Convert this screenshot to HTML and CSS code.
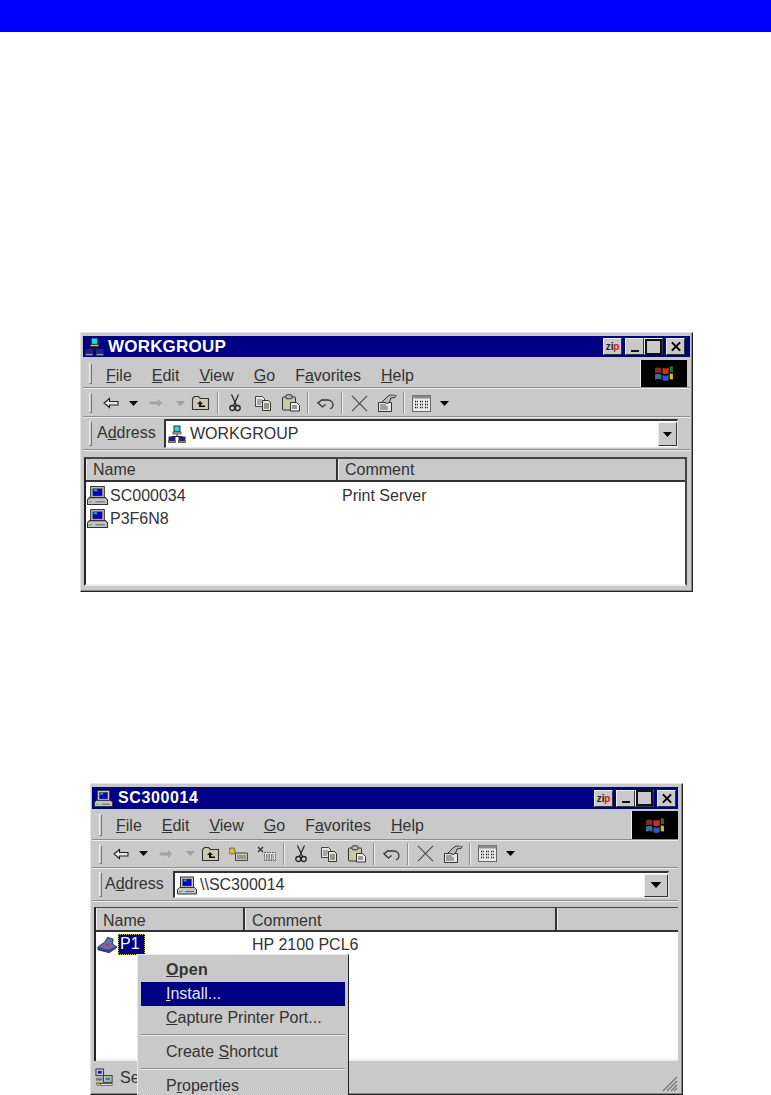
FILE: index.html

```html
<!DOCTYPE html>
<html lang="en">
<head>
    <meta charset="UTF-8">
    <meta name="viewport" content="width=device-width, initial-scale=1.0">
    <title>Network Printer Setup</title>
    <link rel="stylesheet" href="styles.css">
</head>
<body>
    <svg class="defs" width="0" height="0">
        <defs>
            <symbol id="i-pc" viewBox="0 0 20 18">
                <rect x="3.5" y=".5" width="13" height="11" fill="#c9c9c9" stroke="#333"/>
                <rect x="5.5" y="2.5" width="9" height="7" fill="#0606b8" stroke="#555" stroke-width=".5"/>
                <rect x="6.5" y="3" width="3" height="2" fill="#22a6c8"/>
                <path d="M.5 13l2-2h15l2 2v4.500H.5z" fill="#c4c4c4" stroke="#333"/>
                <rect x="2" y="14.500" width="3" height="1" fill="#1bc44a"/>
                <rect x="8" y="14.500" width="9" height="1" fill="#666"/>
            </symbol>
            <symbol id="i-net" viewBox="0 0 18 18">
                <path d="M9 8v3M4 11.500h10M4 11.500v1M14 11.500v1" stroke="#222" fill="none"/>
                <rect x="6" y="1" width="6" height="6" fill="#25d5e0" stroke="#333"/>
                <rect x="5" y="7" width="8" height="2" fill="#bbb" stroke="#333" stroke-width=".7"/>
                <rect x="1" y="12" width="6" height="4" fill="#1616d8" stroke="#333"/>
                <rect x="11" y="12" width="6" height="4" fill="#1616d8" stroke="#333"/>
                <rect x=".5" y="16" width="7" height="1.500" fill="#bbb" stroke="#333" stroke-width=".7"/>
                <rect x="10.500" y="16" width="7" height="1.500" fill="#bbb" stroke="#333" stroke-width=".7"/>
            </symbol>
            <symbol id="i-printer" viewBox="0 0 22 18">
                <path d="M1 11l7-5 3-5 6 2-1 5 5 3-8 6-4-1-8-2z" fill="#6a6fa8" stroke="#2d2f5c"/>
                <path d="M1 11l11 3 9-4v2l-9 5-11-3z" fill="#3d4080"/>
                <rect x="9" y="8" width="4" height="1.500" fill="#c0304a"/>
            </symbol>
            <symbol id="i-status" viewBox="0 0 20 20">
                <rect x="1" y="1" width="8" height="7" fill="#c8c8c8" stroke="#333"/>
                <rect x="3" y="3" width="4" height="3" fill="#1616b0"/>
                <rect x="9" y="8" width="9" height="7" fill="#c8c8c8" stroke="#333"/>
                <rect x="11" y="10" width="5" height="3" fill="#109a9a"/>
                <path d="M1 12.500h7M1 16h17" stroke="#333"/>
                <rect x="1" y="10" width="7" height="1.500" fill="#888"/>
                <circle cx="3" cy="17" r="1.500" fill="#e4d020" stroke="#333" stroke-width=".5"/>
                <rect x="6" y="16.500" width="12" height="2" fill="#ddd" stroke="#333" stroke-width=".6"/>
            </symbol>
            <symbol id="i-back" viewBox="0 0 16 12">
                <path d="M6.500 1.500L1 6l5.500 4.500V8H15V4.500H6.500z" fill="#e6e6e6" stroke="#222" stroke-width="1.100"/>
            </symbol>
            <symbol id="i-fwd" viewBox="0 0 16 12">
                <path d="M9.500 1L15 6l-5.500 5V8H1V4h8.500z" fill="#a4a4a4" stroke="#d8d8d8" stroke-width=".7"/>
            </symbol>
            <symbol id="i-drop" viewBox="0 0 9 5">
                <path d="M0 0h9L4.500 5z"/>
            </symbol>
            <symbol id="i-up" viewBox="0 0 19 16">
                <path d="M1.500 14.500V3.500l2-2h4l2 2h8v11z" fill="#c9c9b4" stroke="#333" stroke-width="1.100"/>
                <path d="M9 6L6 9h2v3h6v-1.500H10V9h2z" fill="#111"/>
            </symbol>
            <symbol id="i-new" viewBox="0 0 20 16">
                <path d="M6.500 14.500V7h12v7.500z" fill="#c9c9b4" stroke="#444"/>
                <path d="M8 10h9M8 12h9" stroke="#666"/>
                <path d="M3 1l1 2 2-1-1 2 2 1-2 1 1 2-2-1-1 2-1-2-2 1 1-2-2-1 2-1-1-2 2 1z" fill="#e8c020" stroke="#444" stroke-width=".5"/>
            </symbol>
            <symbol id="i-delf" viewBox="0 0 20 16">
                <path d="M1 1l5 5M6 1L1 6" stroke="#333" stroke-width="1.300"/>
                <rect x="7.500" y="6.500" width="11" height="8" fill="#ddd" stroke="#555" stroke-dasharray="1.500 1"/>
                <path d="M9 9h8M9 11h8M9 13h8" stroke="#333" stroke-dasharray="1.500 1"/>
            </symbol>
            <symbol id="i-cut" viewBox="0 0 12 18">
                <path d="M2.500 .5l5 11M9.500 .5l-5 11" stroke="#222" stroke-width="1.200" fill="none"/>
                <circle cx="3.300" cy="14" r="2.500" fill="none" stroke="#222" stroke-width="1.300"/>
                <circle cx="8.700" cy="14" r="2.500" fill="none" stroke="#222" stroke-width="1.300"/>
            </symbol>
            <symbol id="i-copy" viewBox="0 0 18 16">
                <path d="M1.500 1.500h7l2 2v8h-9z" fill="#e8e8e8" stroke="#444"/>
                <path d="M3 5h5M3 7h5M3 9h4" stroke="#666"/>
                <path d="M8.500 5.500h6l2 2v8h-8z" fill="#e8e8d8" stroke="#333"/>
                <path d="M10 9h5M10 11h5M10 13h5" stroke="#444"/>
            </symbol>
            <symbol id="i-paste" viewBox="0 0 20 18">
                <rect x="1.500" y="3" width="13" height="13" rx="1" fill="#c9c9a8" stroke="#333"/>
                <rect x="5" y=".8" width="6" height="4" rx="1" fill="#bbb" stroke="#333"/>
                <path d="M9.500 8.500h6l3 3v5.500h-9z" fill="#eee" stroke="#333"/>
                <path d="M11 12h5M11 14h5" stroke="#444"/>
            </symbol>
            <symbol id="i-undo" viewBox="0 0 19 14">
                <path d="M2 7l3.500-3h6c3.500 0 6 2.500 5.500 5.500-.3 2-1.500 3-3 3.500M2 7v-.1l4.500 4 3-2.500" fill="none" stroke="#333" stroke-width="1.300"/>
            </symbol>
            <symbol id="i-x" viewBox="0 0 18 18">
                <path d="M1 1l16 16M17 1L1 17" stroke="#444" stroke-width="1.100"/>
            </symbol>
            <symbol id="i-close" viewBox="0 0 12 12">
                <path d="M1.500 1.500l9 9M10.500 1.500l-9 9" stroke="#000" stroke-width="2.200"/>
            </symbol>
            <symbol id="i-props" viewBox="0 0 21 18">
                <path d="M1.500 8.500h13v9h-13z" fill="#e8e8e8" stroke="#333"/>
                <path d="M3 11h6M3 13h8M3 15h8" stroke="#555"/>
                <path d="M5 8l5-5 3-2 6 .5-1 2-4 .5-1 3-2 2.500z" fill="#bbb" stroke="#333"/>
                <path d="M14 1.500h6" stroke="#777"/>
            </symbol>
            <symbol id="i-views" viewBox="0 0 19 17">
                <rect x=".5" y=".5" width="18" height="16" fill="#ececec" stroke="#666"/>
                <rect x=".5" y=".5" width="18" height="3" fill="#8a8a8a"/>
                <path d="M3 6.500h3M8 6.500h3M13 6.500h3M3 9.500h3M8 9.500h3M13 9.500h3M3 12.500h3M8 12.500h3M13 12.500h3" stroke="#111" stroke-width="1.500" stroke-dasharray="1 .8"/>
            </symbol>
            <symbol id="i-flag" viewBox="0 0 20 18">
                <path d="M1 4c2-1 4-1 6 0v5c-2-1-4-1-6 0z" fill="#7c2f24"/>
                <path d="M8 3.500c2 1 4 1 6 0v5.500c-2 1-4 1-6 0z" fill="#c62f1e"/>
                <path d="M15 2c1 0 2 .5 3 0v5.500c-1 .5-2 0-3 0z" fill="#1c7a28"/>
                <path d="M1 10c2-1 4-1 6 0v5c-2-1-4-1-6 0z" fill="#3c6e9c"/>
                <path d="M8 10.500c2 1 4 1 6 0v5c-2 1-4 1-6 0z" fill="#2a58c8"/>
                <path d="M15 9c1 0 2 .5 3 0v5.500c-1 .5-2 0-3 0z" fill="#d8c020"/>
            </symbol>
        </defs>
    </svg>

    <div class="page">
        <div class="banner"></div>

        <div class="win win-a">
            <div class="titlebar">
                <svg class="title-icon"><use href="#i-net"/></svg>
                <span class="title-text">WORKGROUP</span>
                <div class="title-btns">
                    <span class="tb zip">zi<b>p</b></span>
                    <span class="tb tb-min"></span>
                    <span class="tb tb-max"></span>
                    <span class="tb tb-close"><svg><use href="#i-close"/></svg></span>
                </div>
            </div>
            <div class="bar menubar">
                <span class="grip"></span>
                <span class="menu-items">
                    <span><u>F</u>ile</span><span><u>E</u>dit</span><span><u>V</u>iew</span><span><u>G</u>o</span><span>F<u>a</u>vorites</span><span><u>H</u>elp</span>
                </span>
                <span class="logo"><svg><use href="#i-flag"/></svg></span>
            </div>
            <div class="bar toolbar">
                <span class="grip"></span>
                <span class="tools">
                    <span class="tool w-back"><svg class="ic-arrow"><use href="#i-back"/></svg></span>
                    <span class="tool w-drop"><svg class="ic-drop"><use href="#i-drop"/></svg></span>
                    <span class="tool w-big"><svg class="ic-arrow"><use href="#i-fwd"/></svg></span>
                    <span class="tool w-drop2"><svg class="ic-drop dim"><use href="#i-drop"/></svg></span>
                    <span class="tool w-up"><svg class="ic-up"><use href="#i-up"/></svg></span>
                    <span class="sep"></span>
                    <span class="tool w-big"><svg class="ic-cut"><use href="#i-cut"/></svg></span>
                    <span class="tool w-big"><svg class="ic-copy"><use href="#i-copy"/></svg></span>
                    <span class="tool w-big"><svg class="ic-paste"><use href="#i-paste"/></svg></span>
                    <span class="sep"></span>
                    <span class="tool w-big"><svg class="ic-undo"><use href="#i-undo"/></svg></span>
                    <span class="sep"></span>
                    <span class="tool w-big"><svg class="ic-x"><use href="#i-x"/></svg></span>
                    <span class="tool w-big"><svg class="ic-props"><use href="#i-props"/></svg></span>
                    <span class="sep"></span>
                    <span class="tool w-big"><svg class="ic-views"><use href="#i-views"/></svg></span>
                    <span class="tool w-drop"><svg class="ic-drop"><use href="#i-drop"/></svg></span>
                </span>
            </div>
            <div class="bar addressbar">
                <span class="grip"></span>
                <span class="address-label">A<u>d</u>dress</span>
                <div class="address-field">
                    <svg class="addr-icon"><use href="#i-net"/></svg>
                    <span>WORKGROUP</span>
                    <span class="combo-btn"><svg class="ic-drop"><use href="#i-drop"/></svg></span>
                </div>
            </div>
            <div class="list">
                <div class="list-head">
                    <span class="col col-name">Name</span>
                    <span class="col col-rest">Comment</span>
                </div>
                <div class="list-body">
                    <div class="row">
                        <span class="cell-name"><svg class="row-icon"><use href="#i-pc"/></svg>SC000034</span>
                        <span>Print Server</span>
                    </div>
                    <div class="row">
                        <span class="cell-name"><svg class="row-icon"><use href="#i-pc"/></svg>P3F6N8</span>
                    </div>
                </div>
            </div>
        </div>

        <div class="win win-b">
            <div class="titlebar">
                <svg class="title-icon"><use href="#i-pc"/></svg>
                <span class="title-text">SC300014</span>
                <div class="title-btns">
                    <span class="tb zip">zi<b>p</b></span>
                    <span class="tb tb-min"></span>
                    <span class="tb tb-max"></span>
                    <span class="tb tb-close"><svg><use href="#i-close"/></svg></span>
                </div>
            </div>
            <div class="bar menubar">
                <span class="grip"></span>
                <span class="menu-items">
                    <span><u>F</u>ile</span><span><u>E</u>dit</span><span><u>V</u>iew</span><span><u>G</u>o</span><span>F<u>a</u>vorites</span><span><u>H</u>elp</span>
                </span>
                <span class="logo"><svg><use href="#i-flag"/></svg></span>
            </div>
            <div class="bar toolbar">
                <span class="grip"></span>
                <span class="tools">
                    <span class="tool w-back"><svg class="ic-arrow"><use href="#i-back"/></svg></span>
                    <span class="tool w-drop"><svg class="ic-drop"><use href="#i-drop"/></svg></span>
                    <span class="tool w-big"><svg class="ic-arrow"><use href="#i-fwd"/></svg></span>
                    <span class="tool w-drop2"><svg class="ic-drop dim"><use href="#i-drop"/></svg></span>
                    <span class="tool w-up"><svg class="ic-up"><use href="#i-up"/></svg></span>
                    <span class="tool w-big"><svg class="ic-new"><use href="#i-new"/></svg></span>
                    <span class="tool w-big"><svg class="ic-new"><use href="#i-delf"/></svg></span>
                    <span class="sep"></span>
                    <span class="tool w-big"><svg class="ic-cut"><use href="#i-cut"/></svg></span>
                    <span class="tool w-big"><svg class="ic-copy"><use href="#i-copy"/></svg></span>
                    <span class="tool w-big"><svg class="ic-paste"><use href="#i-paste"/></svg></span>
                    <span class="sep"></span>
                    <span class="tool w-big"><svg class="ic-undo"><use href="#i-undo"/></svg></span>
                    <span class="sep"></span>
                    <span class="tool w-big"><svg class="ic-x"><use href="#i-x"/></svg></span>
                    <span class="tool w-big"><svg class="ic-props"><use href="#i-props"/></svg></span>
                    <span class="sep"></span>
                    <span class="tool w-big"><svg class="ic-views"><use href="#i-views"/></svg></span>
                    <span class="tool w-drop"><svg class="ic-drop"><use href="#i-drop"/></svg></span>
                </span>
            </div>
            <div class="bar addressbar">
                <span class="grip"></span>
                <span class="address-label">A<u>d</u>dress</span>
                <div class="address-field">
                    <svg class="addr-icon"><use href="#i-pc"/></svg>
                    <span>\\SC300014</span>
                    <span class="combo-btn"><svg class="ic-drop"><use href="#i-drop"/></svg></span>
                </div>
            </div>
            <div class="list">
                <div class="list-head">
                    <span class="col col-name">Name</span>
                    <span class="col col-comment">Comment</span>
                    <span class="col col-rest"></span>
                </div>
                <div class="list-body">
                    <div class="row">
                        <span class="cell-name">
                            <svg class="row-icon printer"><use href="#i-printer"/></svg>
                            <span class="selected">P1</span>
                        </span>
                        <span>HP 2100 PCL6</span>
                    </div>
                    <div class="context-menu">
                        <div class="cm-item cm-default"><u>O</u>pen</div>
                        <div class="cm-item cm-active"><u>I</u>nstall...</div>
                        <div class="cm-item"><u>C</u>apture Printer Port...</div>
                        <div class="cm-sep"></div>
                        <div class="cm-item">Create <u>S</u>hortcut</div>
                        <div class="cm-sep"></div>
                        <div class="cm-item">P<u>r</u>operties</div>
                    </div>
                </div>
            </div>
            <div class="statusbar">
                <svg class="status-icon"><use href="#i-status"/></svg>
                <span>Se</span>
                <svg class="resize-grip" viewBox="0 0 18 18">
                    <path d="M17 3L3 17M17 7L7 17M17 11L11 17M17 14L14 17" stroke="#777" stroke-width="1.200"/>
                </svg>
            </div>
        </div>
    </div>
</body>
</html>
```

FILE: styles.css

```css
* {
    box-sizing: border-box;
}
body {
    margin: 0;
    background: #fff;
    font-family: "Liberation Sans", Arial, sans-serif;
    font-size: 16px;
    color: #333;
}
.defs {
    display: block;
    height: 0;
}
.page {
    height: 1095px;
    overflow: hidden;
}
.banner {
    height: 32px;
    background: #0000ff;
}

/* window frame */
.win {
    background: #c9c9c9;
    border: 1px solid #222;
    border-top-color: #e4e4e4;
    border-left-color: #e4e4e4;
    box-shadow: inset -1px -1px 0 #8a8a8a;
}
.win-a {
    width: 613px;
    margin: 300px 0 0 80px;
    padding: 3px 2px 5px 2px;
}
.win-b {
    width: 593px;
    margin: 191px 0 0 90px;
    padding: 3px 4px 1px 1px;
    background: repeating-conic-gradient(#c2c2c2 0 25%, #d0d0d0 0 50%) 0 0 / 2px 2px;
}
.titlebar {
    display: flex;
    align-items: center;
    background: #000084;
    color: #fff;
    padding-left: 2px;
}
.win-a .titlebar {
    height: 21px;
}
.win-b .titlebar {
    height: 22px;
}
.title-icon {
    width: 19px;
    height: 19px;
    flex: none;
}
.title-text {
    margin-left: 4px;
    font-size: 17px;
    font-weight: bold;
    letter-spacing: .2px;
}
.win-b .title-text {
    font-size: 16px;
    letter-spacing: .6px;
    margin-left: 5px;
}
.title-btns {
    display: flex;
    margin-left: auto;
}
.win-a .title-btns {
    margin-right: 5px;
}
.win-b .title-btns {
    margin-right: 2px;
}
.tb {
    width: 19px;
    height: 17px;
    background: #c9c9c9;
    border: 1px solid;
    border-color: #eee #333 #333 #eee;
    display: flex;
    align-items: center;
    justify-content: center;
}
.tb svg {
    width: 12px;
    height: 11px;
}
.zip {
    margin-right: 3px;
    font-size: 10px;
    font-weight: bold;
    color: #222;
    letter-spacing: -.2px;
}
.zip b {
    color: #e01010;
}
.tb-min::before {
    content: "";
    width: 8px;
    height: 2px;
    background: #111;
    margin-top: 8px;
}
.tb-max::before {
    content: "";
    width: 13px;
    height: 12px;
    border: 2px solid #111;
    border-top-width: 2px;
}
.tb-close {
    margin-left: 3px;
}

/* rebars */
.bar {
    display: flex;
    align-items: center;
    border-bottom: 1px solid #8e8e8e;
    box-shadow: 0 1px 0 #ececec;
}
.grip {
    width: 3px;
    flex: none;
    align-self: stretch;
    margin: 3px 0;
    background: #c9c9c9;
    border: 1px solid;
    border-color: #eee #777 #777 #eee;
}
.win-a .grip {
    margin-left: 6px;
}
.win-b .grip {
    margin-left: 7px;
}
.menubar {
    margin-top: 3px;
}
.win-a .menubar {
    height: 28px;
}
.win-b .menubar {
    height: 29px;
    margin-top: 2px;
}
.menu-items {
    display: flex;
    gap: 20px;
    margin-left: 14px;
    white-space: nowrap;
}
.win-a .menu-items {
    padding-top: 4px;
}
.win-b .menu-items {
    padding-top: 2px;
}
.logo {
    margin-left: auto;
    align-self: stretch;
    width: 47px;
    background: #000;
    border-left: 1px solid #eee;
    display: flex;
    align-items: center;
    justify-content: center;
}
.logo svg {
    width: 21px;
    height: 19px;
}
.win-a .logo {
    margin-right: 3px;
}
.toolbar {
    margin-top: 2px;
}
.win-a .toolbar {
    height: 27px;
}
.win-b .toolbar {
    height: 26px;
}
.tools {
    display: flex;
    align-items: center;
    margin-left: 6px;
}
.win-b .tools {
    padding-bottom: 2px;
}
.tool {
    display: flex;
    align-items: center;
    justify-content: center;
    flex: none;
}
.w-back {
    width: 26px;
}
.w-drop {
    width: 18px;
}
.w-drop2 {
    width: 20px;
}
.w-up {
    width: 21px;
    margin-right: 4px;
}
.w-big {
    width: 28px;
}
.sep {
    width: 2px;
    height: 22px;
    margin: 0 2px;
    flex: none;
    background: #8e8e8e;
    border-right: 1px solid #eee;
}
.ic-arrow {
    width: 16px;
    height: 12px;
}
.ic-drop {
    width: 9px;
    height: 5px;
    fill: #000;
}
.ic-drop.dim {
    fill: #a0a0a0;
}
.ic-up {
    width: 19px;
    height: 16px;
}
.ic-new {
    width: 20px;
    height: 16px;
}
.ic-cut {
    width: 12px;
    height: 18px;
}
.ic-copy {
    width: 18px;
    height: 16px;
}
.ic-paste {
    width: 20px;
    height: 18px;
}
.ic-undo {
    width: 19px;
    height: 14px;
}
.ic-x {
    width: 17px;
    height: 17px;
}
.ic-props {
    width: 21px;
    height: 18px;
}
.ic-views {
    width: 19px;
    height: 17px;
}

/* address row */
.addressbar {
    height: 32px;
    margin-top: 1px;
}
.address-label {
    flex: none;
    width: 67px;
    margin-left: 5px;
    padding-bottom: 1px;
    white-space: nowrap;
}
.win-b .address-label {
    width: 68px;
    margin-left: 3px;
}
.address-field {
    display: flex;
    align-items: center;
    height: 29px;
    background: #fff;
    border: 1px solid;
    border-width: 2px 1px 1px 2px;
    border-color: #333 #e4e4e4 #e4e4e4 #333;
    padding-left: 2px;
    flex: 1;
}
.win-a .address-field {
    margin-right: 12px;
}
.win-b .address-field {
    margin-right: 9px;
    height: 27px;
}
.addr-icon {
    width: 18px;
    height: 18px;
    margin-right: 4px;
    flex: none;
}
.win-b .addr-icon {
    width: 20px;
    height: 19px;
    margin-right: 3px;
}
.combo-btn {
    margin-left: auto;
    width: 19px;
    height: 24px;
    background: #c9c9c9;
    border: 1px solid;
    border-color: #eee #333 #333 #eee;
    display: flex;
    align-items: center;
    justify-content: center;
}
.win-b .combo-btn {
    width: 24px;
    height: 23px;
}
.win-b .combo-btn .ic-drop {
    width: 12px;
    height: 6px;
}

/* details list */
.list {
    margin-top: 6px;
    border-left: 2px solid #222;
    border-top: 2px solid #444;
}
.win-a .list {
    margin-top: 7px;
    margin-right: 3px;
    margin-left: 1px;
    border-right: 2px solid #444;
    border-bottom: 2px solid #eee;
}
.win-b .list {
    margin-left: 2px;
    border-top-width: 1px;
}
.list-head {
    display: flex;
    border-bottom: 2px solid #333;
}
.win-a .list-head {
    height: 23px;
}
.win-b .list-head {
    height: 24px;
}
.col {
    display: flex;
    align-items: center;
    padding: 1px 0 0 6px;
    border-left: 1px solid #f0f0f0;
    border-right: 2px solid #333;
}
.win-b .col {
    padding-top: 3px;
}
.win-a .col-name {
    width: 252px;
}
.win-b .col-name {
    width: 149px;
}
.win-b .col-comment {
    width: 312px;
}
.col-rest {
    flex: 1;
    border-right: none;
}
.list-body {
    position: relative;
    background: #fff;
    padding-top: 2px;
}
.win-a .list-body {
    height: 102px;
}
.win-b .list-body {
    height: 129px;
    border-bottom: 2px solid #eee;
    padding-top: 1px;
}
.row {
    display: flex;
    align-items: center;
    height: 23px;
    white-space: nowrap;
}
.cell-name {
    display: flex;
    align-items: center;
    width: 256px;
    padding-left: 1px;
}
.win-b .cell-name {
    width: 156px;
}
.row-icon {
    width: 21px;
    height: 19px;
    margin-right: 2px;
    flex: none;
}
.printer {
    width: 21px;
    height: 18px;
    margin-right: 0;
}
.selected {
    background: #000084;
    color: #fff;
    padding: 0 3px 0 2px;
    height: 21px;
    outline: 1px dotted #c8c060;
    outline-offset: -1px;
    line-height: 20px;
    width: 27px;
}

/* right click menu */
.context-menu {
    position: absolute;
    top: 22px;
    left: 41px;
    width: 212px;
    padding: 3px;
    background: repeating-conic-gradient(#c2c2c2 0 25%, #d0d0d0 0 50%) 0 0 / 2px 2px;
    border: 1px solid;
    border-color: #e8e8e8 #222 #222 #e8e8e8;
}
.cm-item {
    height: 24px;
    line-height: 23px;
    padding-left: 25px;
    white-space: nowrap;
}
.cm-default {
    font-weight: bold;
    letter-spacing: .3px;
}
.cm-active {
    background: #000084;
    color: #e4e4e4;
}
.cm-sep {
    height: 2px;
    margin: 4px 0;
    background: #8e8e8e;
    border-bottom: 1px solid #eee;
}

/* status bar */
.statusbar {
    display: flex;
    align-items: center;
    height: 31px;
    margin-top: 1px;
    padding-left: 3px;
}
.status-icon {
    width: 19px;
    height: 19px;
    margin-right: 6px;
}
.resize-grip {
    margin-left: auto;
    margin-top: 10px;
    width: 18px;
    height: 18px;
}
```
